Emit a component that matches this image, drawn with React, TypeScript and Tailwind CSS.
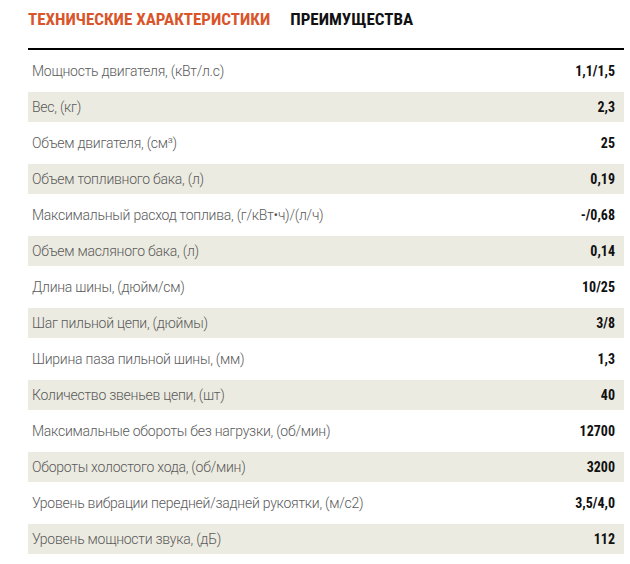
const specs: [string, string][] = [
  ['Мощность двигателя, (кВт/л.с)', '1,1/1,5'],
  ['Вес, (кг)', '2,3'],
  ['Объем двигателя, (см³)', '25'],
  ['Объем топливного бака, (л)', '0,19'],
  ['Максимальный расход топлива, (г/кВт•ч)/(л/ч)', '-/0,68'],
  ['Объем масляного бака, (л)', '0,14'],
  ['Длина шины, (дюйм/см)', '10/25'],
  ['Шаг пильной цепи, (дюймы)', '3/8'],
  ['Ширина паза пильной шины, (мм)', '1,3'],
  ['Количество звеньев цепи, (шт)', '40'],
  ['Максимальные обороты без нагрузки, (об/мин)', '12700'],
  ['Обороты холостого хода, (об/мин)', '3200'],
  ['Уровень вибрации передней/задней рукоятки, (м/с2)', '3,5/4,0'],
  ['Уровень мощности звука, (дБ)', '112'],
];

const narrow = "font-['Liberation_Sans_Narrow','Roboto_Condensed','DejaVu_Sans_Condensed',sans-serif] [font-stretch:condensed]";

export default function App() {
  return (
    <div className="w-[630px] h-[564px] bg-white pl-[28px] pr-[6px] font-['Liberation_Sans',sans-serif]">
      {/* Tabs */}
      <div className={`flex items-end gap-[20px] h-[34px] pb-[6px] font-bold text-[17px] leading-none uppercase ${narrow}`}>
        <span className="text-[#d9552b]">Технические характеристики</span>
        <span className="text-[#111]">Преимущества</span>
      </div>
      <div className="mt-[14px] h-[2px] bg-black" />

      {/* Specs */}
      <div className="flex flex-col gap-[6px] pt-[6px]">
        {specs.map(([label, value], i) => (
          <div
            key={label}
            className={`flex items-center justify-between h-[30px] pl-[4px] pr-[9px] ${i % 2 === 1 ? 'bg-[#ecebe1]' : 'bg-white'}`}
          >
            <span className="text-[14px] tracking-[-0.25px] text-[#5a5a5a] font-light font-['Roboto',sans-serif]">{label}</span>
            <span className={`text-[14px] font-bold text-[#111] ${narrow}`}>{value}</span>
          </div>
        ))}
      </div>
    </div>
  );
}
